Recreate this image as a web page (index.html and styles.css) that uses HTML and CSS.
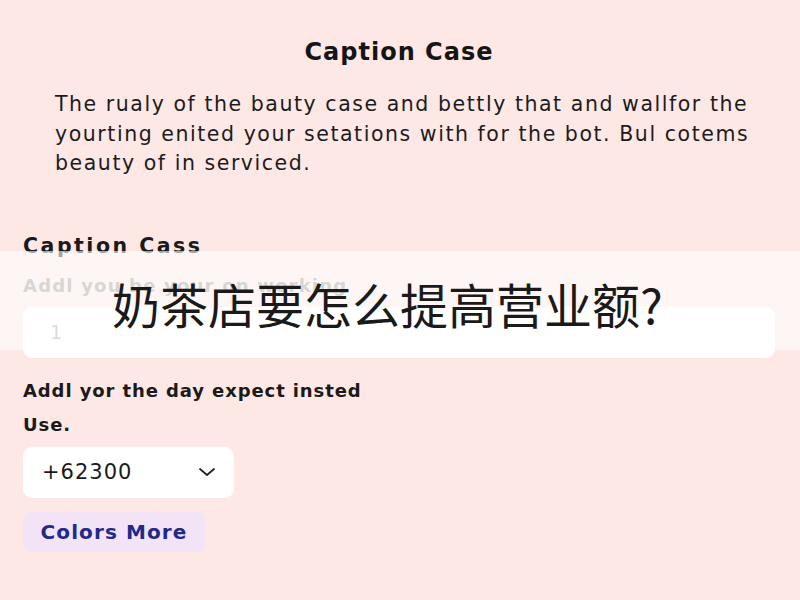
FILE: index.html
```html
<!DOCTYPE html>
<html lang="en">
<head>
<meta charset="utf-8">
<link rel="stylesheet" href="styles.css">
</head>
<body>
<div class="page">
  <h1 class="title">Caption Case</h1>
  <p class="intro">The rualy of the bauty case and bettly that and wallfor the yourting enited your setations with for the bot. Bul cotems beauty of in serviced.</p>
  <h2 class="section">Caption Cass</h2>
  <div class="hint">Addl you be your on working</div>
  <div class="input">1</div>
  <div class="label">Addl yor the day expect insted<br>Use.</div>
  <div class="select">
    <span>+62300</span>
    <svg class="chev" width="18" height="10" viewBox="0 0 18 10"><path d="M2 2 L9 8 L16 2" fill="none" stroke="#222" stroke-width="1.8" stroke-linecap="round" stroke-linejoin="round"/></svg>
  </div>
  <div class="btn">Colors More</div>
</div>
<div class="band"><span class="caption">奶茶店要怎么提高营业额?</span></div>
</body>
</html>
```
FILE: styles.css
```css
html, body {
  margin: 0;
  padding: 0;
  background: #fde8e6;
  width: 800px;
  height: 600px;
  overflow: hidden;
}
body {
  font-family: "DejaVu Sans", "Liberation Sans", sans-serif;
  color: #1a1a1a;
  position: relative;
}
.page {
  padding: 38px 25px 0 23px;
  display: flex;
  flex-direction: column;
}
.title {
  margin: 0;
  text-align: center;
  font-size: 24px;
  font-weight: 700;
  letter-spacing: 1px;
  line-height: 28px;
  color: #151515;
}
.intro {
  margin: 24px 0 0 32px;
  font-size: 20.5px;
  letter-spacing: 1.55px;
  line-height: 29.5px;
  color: #1c1c1c;
  width: 722px;
}
.section {
  margin: 54px 0 0 0;
  font-size: 20.5px;
  letter-spacing: 2.5px;
  font-weight: 700;
  line-height: 26px;
  color: #1a1a1a;
}
.hint {
  margin-top: 15px;
  font-size: 18px;
  letter-spacing: 1.2px;
  line-height: 24px;
  color: #9a9a9a;
  font-weight: 700;
}
.input {
  margin-top: 9px;
  height: 51px;
  width: 752px;
  background: #fff;
  border-radius: 9px;
  box-sizing: border-box;
  padding-left: 27px;
  display: flex;
  align-items: center;
  font-size: 19px;
  color: #a8a8a8;
}
.label {
  margin-top: 16px;
  font-size: 18px;
  font-weight: 700;
  letter-spacing: 0.9px;
  line-height: 34px;
  color: #1a1a1a;
}
.select {
  margin-top: 5px;
  width: 211px;
  height: 51px;
  background: #fff;
  border-radius: 9px;
  box-sizing: border-box;
  padding: 0 18px 0 19px;
  display: flex;
  align-items: center;
  justify-content: space-between;
  font-size: 21px;
  letter-spacing: 1px;
  color: #1a1a1a;
}
.btn {
  margin-top: 14px;
  width: 182px;
  height: 40px;
  background: #f3e3f6;
  border-radius: 7px;
  display: flex;
  align-items: center;
  justify-content: center;
  font-size: 20px;
  font-weight: 700;
  letter-spacing: 1.1px;
  color: #1f2a8a;
}
.band {
  position: absolute;
  left: 0;
  top: 251px;
  width: 800px;
  height: 99px;
  background: rgba(255, 255, 255, 0.6);
  display: flex;
  align-items: center;
  padding-left: 112px;
  box-sizing: border-box;
}
.caption {
  font-family: "Noto Sans CJK SC", sans-serif;
  font-size: 48px;
  line-height: 1;
  color: #1a1a1a;
  margin-top: 4px;
}
```
